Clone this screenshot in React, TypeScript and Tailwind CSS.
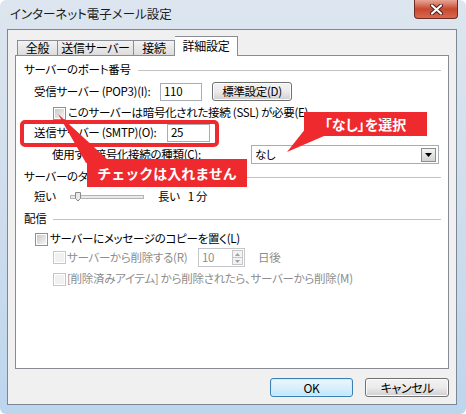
import React from "react";

function Check({ disabled = false }: { disabled?: boolean }) {
  return (
    <span
      className={
        disabled
          ? "inline-flex h-[13px] w-[13px] shrink-0 border border-[#c6c6c6] bg-white p-[1px]"
          : "inline-flex h-[13px] w-[13px] shrink-0 border border-[#8e8f8f] bg-white p-[1px]"
      }
    >
      <span
        className={
          disabled
            ? "block h-full w-full bg-[#f1f1f1]"
            : "block h-full w-full bg-gradient-to-br from-[#c9c9c9] to-[#f4f4f4]"
        }
      />
    </span>
  );
}

function GroupLabel({ children, className = "" }: { children: React.ReactNode; className?: string }) {
  return (
    <div className={`flex h-[16px] items-center pl-[8px] pr-[7px] ${className}`}>
      <span className="whitespace-nowrap">{children}</span>
      <span className="ml-[7px] h-px flex-1 bg-[#c3c3c3]" />
    </div>
  );
}

function WinButton({ children, isDefault = false, className = "" }: { children: React.ReactNode; isDefault?: boolean; className?: string }) {
  return (
    <div
      className={
        isDefault
          ? `flex shrink-0 items-center justify-center whitespace-nowrap rounded-[3px] border border-[#3c7fb1] bg-gradient-to-b from-[#eaf6fd] via-[#d9f0fc] to-[#bee6fd] shadow-[inset_0_0_0_1px_#c9f0fc] ${className}`
          : `flex shrink-0 items-center justify-center whitespace-nowrap rounded-[3px] border border-[#707070] bg-gradient-to-b from-[#f2f2f2] via-[#ebebeb] to-[#cfcfcf] shadow-[inset_0_0_0_1px_#fcfcfc] ${className}`
      }
    >
      {children}
    </div>
  );
}

export default function App() {
  return (
    <div className="relative h-[414px] w-[466px] overflow-hidden rounded-[6px] bg-gradient-to-b from-[#dde6ef] via-[#cfdded] to-[#bcd6ee] font-['Noto_Sans_CJK_JP','Noto_Sans',sans-serif] text-[11.5px] leading-none tracking-[-0.3px] text-black [font-feature-settings:'palt']">
      {/* Title bar */}
      <div className="flex h-[29px] items-start justify-between pl-[10px] pr-[8px]">
        <div className="mt-[8px] text-[12.5px] tracking-normal text-[#1b1b1b]">インターネット電子メール設定</div>
        <div className="flex h-[19px] w-[44px] items-center justify-center rounded-b-[4px] border border-t-0 border-[#6b2c23] bg-gradient-to-b from-[#e7a596] via-[#c8472f] to-[#d7694f]">
          <svg width="13" height="11" viewBox="0 0 13 11">
            <path d="M2 1.5 L11 9.5 M11 1.5 L2 9.5" stroke="#4a1d16" strokeWidth="4" strokeLinecap="round" />
            <path d="M2 1.5 L11 9.5 M11 1.5 L2 9.5" stroke="#ffffff" strokeWidth="2.2" strokeLinecap="round" />
          </svg>
        </div>
      </div>

      {/* Client area */}
      <div className="ml-[7px] flex h-[376px] w-[450px] flex-col border border-[#7c8795] bg-[#f0f0f0]">
        {/* Tabs */}
        <div className="relative z-10 -mb-px mt-[6px] flex h-[20px] items-end pl-[9px] text-[12px]">
          <div className="flex h-[16px] w-[41px] items-center justify-center border border-[#898c95] bg-gradient-to-b from-[#f3f3f3] to-[#dcdcdc]">全般</div>
          <div className="flex h-[16px] w-[76px] items-center justify-center border border-l-0 border-[#898c95] bg-gradient-to-b from-[#f3f3f3] to-[#dcdcdc]">送信サーバー</div>
          <div className="flex h-[16px] w-[41px] items-center justify-center border border-l-0 border-[#898c95] bg-gradient-to-b from-[#f3f3f3] to-[#dcdcdc]">接続</div>
          <div className="flex h-[20px] w-[63px] items-center justify-center border border-b-0 border-l-0 border-[#898c95] bg-white pb-[1px]">詳細設定</div>
        </div>

        {/* Panel */}
        <div className="ml-[7px] flex h-[314px] w-[434px] flex-col border border-[#898c95] bg-white pt-[6px]">
          <GroupLabel>サーバーのポート番号</GroupLabel>

          <div className="mt-[4px] flex h-[19px] items-center whitespace-nowrap">
            <span className="ml-[18px] w-[126px] shrink-0">受信サーバー (POP3)(I):</span>
            <div className="flex h-[18px] w-[42px] shrink-0 items-center border border-[#a6adb6] pl-[3px]">110</div>
            <WinButton className="ml-[10px] h-[19px] w-[80px]">標準設定(D)</WinButton>
          </div>

          <div className="mt-[5px] flex h-[14px] items-center whitespace-nowrap">
            <span className="ml-[37px]"><Check /></span>
            <span className="ml-[2px]">このサーバーは暗号化された接続 (SSL) が必要(E)</span>
          </div>

          <div className="mt-[4px] flex h-[18px] items-center whitespace-nowrap">
            <span className="ml-[18px] w-[133px] shrink-0">送信サーバー (SMTP)(O):</span>
            <div className="flex h-[18px] w-[43px] shrink-0 items-center border border-[#a6adb6] pl-[3px]">25</div>
          </div>

          <div className="mt-[3px] flex h-[19px] items-center whitespace-nowrap">
            <span className="ml-[36px] w-[199px] shrink-0">使用する暗号化接続の種類(C):</span>
            <div className="flex h-[19px] w-[188px] shrink-0 items-center justify-between border border-[#a6adb6] pl-[3px] pr-[2px]">
              <span>なし</span>
              <div className="flex h-[14px] w-[15px] items-center justify-center border border-[#8a8d93] bg-gradient-to-b from-[#f4f4f4] to-[#d2d2d2]">
                <svg width="7" height="4" viewBox="0 0 7 4">
                  <path d="M0 0 H7 L3.5 4 Z" fill="#000" />
                </svg>
              </div>
            </div>
          </div>

          <GroupLabel className="mt-[5px]">サーバーのタイムアウト</GroupLabel>

          <div className="mt-[4px] flex h-[16px] items-center whitespace-nowrap">
            <span className="ml-[18px] w-[36px] shrink-0">短い</span>
            <svg width="74" height="10" viewBox="0 0 74 10" className="shrink-0">
              <rect x="0.5" y="3.5" width="73" height="3" fill="#e7eaea" stroke="#b4b4b4" />
              <path d="M5.5 0.5 H10.5 V6.5 L8 9 L5.5 6.5 Z" fill="#e9e9e9" stroke="#8a8a8a" />
            </svg>
            <span className="ml-[14px]">長い</span>
            <span className="ml-[8px]">1 分</span>
          </div>

          <GroupLabel className="mt-[6px]">配信</GroupLabel>

          <div className="mt-[5px] flex h-[14px] items-center whitespace-nowrap">
            <span className="ml-[19px]"><Check /></span>
            <span className="ml-[2px]">サーバーにメッセージのコピーを置く(L)</span>
          </div>

          <div className="mt-[2px] flex h-[19px] items-center whitespace-nowrap text-[#8d8d8d]">
            <span className="ml-[37px]"><Check disabled /></span>
            <span className="ml-[1px] w-[131px] shrink-0">サーバーから削除する(R)</span>
            <div className="flex h-[19px] w-[47px] shrink-0 items-center justify-between border border-[#c3c7cc] pl-[3px] pr-[1px]">
              <span>10</span>
              <div className="flex h-[15px] w-[11px] flex-col border border-[#c6c6c6]">
                <div className="flex flex-1 items-center justify-center border-b border-[#c6c6c6] bg-[#f3f3f3]">
                  <svg width="5" height="3" viewBox="0 0 5 3"><path d="M0 3 H5 L2.5 0 Z" fill="#a0a0a0" /></svg>
                </div>
                <div className="flex flex-1 items-center justify-center bg-[#f3f3f3]">
                  <svg width="5" height="3" viewBox="0 0 5 3"><path d="M0 0 H5 L2.5 3 Z" fill="#a0a0a0" /></svg>
                </div>
              </div>
            </div>
            <span className="ml-[13px]">日後</span>
          </div>

          <div className="mt-[5px] flex h-[14px] items-center whitespace-nowrap text-[#8d8d8d]">
            <span className="ml-[37px]"><Check disabled /></span>
            <span className="ml-[1px]">[削除済みアイテム] から削除されたら、サーバーから削除(M)</span>
          </div>
        </div>

        {/* Buttons */}
        <div className="mt-[9px] flex justify-end gap-[12px] pr-[7px] text-[12px]">
          <WinButton isDefault className="h-[19px] w-[83px]">OK</WinButton>
          <WinButton className="h-[19px] w-[84px]">キャンセル</WinButton>
        </div>
      </div>

      {/* Annotations */}
      <div className="pointer-events-none absolute left-[20px] top-[120px] h-[27px] w-[199px] rounded-[5px] border-[4px] border-[#ee2a2e]" />
      <svg className="pointer-events-none absolute left-0 top-0" width="466" height="414" viewBox="0 0 466 414">
        <polygon points="58,114 86,163 108,160" fill="#ee2a2e" />
        <polygon points="306,128 324,136 287,152" fill="#ee2a2e" />
      </svg>
      <div className="pointer-events-none absolute left-[304px] top-[112px] flex h-[24px] w-[123px] items-center justify-center bg-[#ee2a2e] text-[14px] font-bold tracking-normal text-white">
        「なし」を選択
      </div>
      <div className="pointer-events-none absolute left-[87px] top-[159px] flex h-[28px] w-[160px] items-center justify-center bg-[#ee2a2e] text-[14px] font-bold tracking-normal text-white [font-feature-settings:normal]">
        チェックは入れません
      </div>
    </div>
  );
}
